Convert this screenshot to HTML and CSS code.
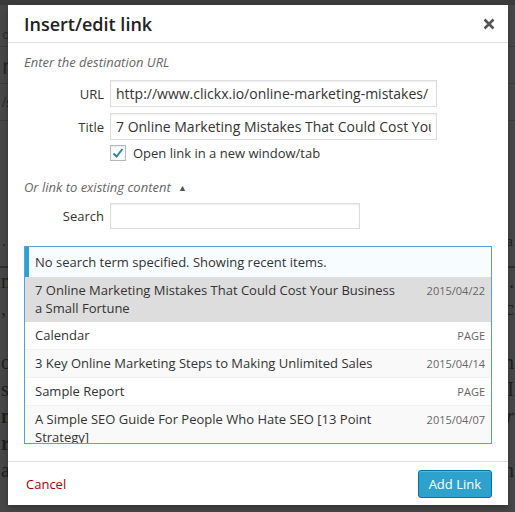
FILE: index.html
```html
<!DOCTYPE html>
<html lang="en">
<head>
    <meta charset="UTF-8">
    <title>Insert/edit link</title>
    <link rel="stylesheet" href="styles.css">
</head>
<body>

    <!-- dimmed editor page behind the modal -->
    <div class="backdrop">
        <div class="band band-top"><span>os</span></div>
        <div class="band"><span class="big">ma</span></div>
        <div class="band"><span>/s</span></div>
        <div class="band band-tall"><span>.</span><span class="right-bit">a</span></div>
        <div class="page-text">
            <p>n<span class="right-bit">.</span></p>
            <p>, <span class="right-bit">c</span></p>
            <p>&nbsp; t</p>
            <p>o<span class="right-bit">h</span></p>
            <p>s<span class="right-bit">I</span></p>
            <p><b>n</b><span class="right-bit"><i>r</i></span></p>
            <p><b>r</b></p>
            <p>a<span class="right-bit">n</span></p>
        </div>
    </div>

    <div class="modal">
        <div class="modal-header">
            <h1>Insert/edit link</h1>
            <svg class="close" width="12" height="12" viewBox="0 0 12 12"><path d="M1.5 1.5 L10.5 10.5 M10.5 1.5 L1.5 10.5" stroke="#555" stroke-width="2.6"/></svg>
        </div>

        <div class="modal-body">
            <p class="howto">Enter the destination URL</p>

            <div class="field">
                <label>URL</label>
                <input type="text" value="http://www.clickx.io/online-marketing-mistakes/">
            </div>
            <div class="field">
                <label>Title</label>
                <input type="text" value="7 Online Marketing Mistakes That Could Cost Your Business a Small Fortune">
            </div>
            <div class="field check-row">
                <label></label>
                <span class="checkbox">
                    <svg width="12" height="12" viewBox="0 0 12 12"><path d="M1.5 6.5 L4.5 9.5 L10.5 2" fill="none" stroke="#1e8cbe" stroke-width="2"/></svg>
                </span>
                <span>Open link in a new window/tab</span>
            </div>

            <p class="howto toggle">Or link to existing content <span class="arrow">&#9650;</span></p>

            <div class="field search-row">
                <label>Search</label>
                <input type="text" class="search" value="">
            </div>

            <div class="results">
                <div class="notice">No search term specified. Showing recent items.</div>
                <ul>
                    <li class="selected"><span class="item-title">7 Online Marketing Mistakes That Could Cost Your Business a Small Fortune</span><span class="info">2015/04/22</span></li>
                    <li><span class="item-title">Calendar</span><span class="info">PAGE</span></li>
                    <li class="alt"><span class="item-title">3 Key Online Marketing Steps to Making Unlimited Sales</span><span class="info">2015/04/14</span></li>
                    <li><span class="item-title">Sample Report</span><span class="info">PAGE</span></li>
                    <li class="alt"><span class="item-title">A Simple SEO Guide For People Who Hate SEO [13 Point Strategy]</span><span class="info">2015/04/07</span></li>
                </ul>
            </div>
        </div>

        <div class="modal-footer">
            <a class="cancel">Cancel</a>
            <button>Add Link</button>
        </div>
    </div>

</body>
</html>
```

FILE: styles.css
```css
body {
    margin: 0;
    width: 515px;
    height: 512px;
    overflow: hidden;
    background: #474747;
    font-family: "Open Sans", "Noto Sans", sans-serif;
    position: relative;
}

/* background page, already dimmed */
.backdrop {
    height: 512px;
    color: #1f1f1f;
    font-family: "Liberation Serif", serif;
}
.band {
    height: 36px;
    border-bottom: 1px solid #3c3c3c;
    font-size: 15px;
    line-height: 36px;
    display: flex;
    justify-content: space-between;
    padding: 0 2px;
}
.band-top {
    height: 47px;
    line-height: 58px;
    border-top: 5px solid #3b3b3b;
    box-sizing: border-box;
    font-family: "Open Sans", sans-serif;
    font-size: 13px;
    color: #2a2a2a;
}
.band .big {
    font-family: "Open Sans", sans-serif;
    font-size: 22px;
    color: #252525;
}
.band-tall {
    height: 145px;
    line-height: 240px;
    border-bottom: 2px solid #2e2e2e;
}
.page-text p {
    margin: 0;
    font-size: 20px;
    line-height: 27px;
    display: flex;
    justify-content: space-between;
    padding: 0 1px;
}

/* modal */
.modal {
    position: absolute;
    left: 8px;
    top: 5px;
    width: 500px;
    height: 500px;
    background: #fff;
    box-shadow: 0 3px 6px rgba(0, 0, 0, 0.3);
    display: flex;
    flex-direction: column;
    color: #333;
}
.modal-header {
    height: 37px;
    flex-shrink: 0;
    border-bottom: 1px solid #ddd;
    display: flex;
    align-items: center;
    justify-content: space-between;
    padding: 0 13px 0 16px;
}
.modal-header h1 {
    margin: 0;
    font-size: 18px;
    font-weight: 600;
    color: #222;
}

.modal-body {
    padding: 6px 16px 0;
    flex: 1;
    font-size: 13px;
}
.howto {
    margin: 0;
    font-style: italic;
    color: #666;
    line-height: 26px;
}
.field {
    display: flex;
    align-items: center;
    margin-top: 6px;
}
.field:first-of-type {
    margin-top: 5px;
}
.field label {
    width: 80px;
    text-align: right;
    padding-right: 6px;
    flex-shrink: 0;
}
.field input {
    width: 327px;
    height: 27px;
    box-sizing: border-box;
    border: 1px solid #ddd;
    box-shadow: inset 0 1px 2px rgba(0, 0, 0, 0.07);
    font-family: "Open Sans", sans-serif;
    font-size: 14px;
    color: #333;
    padding: 0 5px;
    margin: 0;
}
.field input.search {
    width: 250px;
    height: 26px;
}
.check-row {
    margin-top: 4px;
    height: 17px;
}
.checkbox {
    width: 16px;
    height: 16px;
    box-sizing: border-box;
    border: 1px solid #b4b9be;
    box-shadow: inset 0 1px 2px rgba(0, 0, 0, 0.1);
    display: flex;
    align-items: center;
    justify-content: center;
    margin-right: 7px;
}
.toggle {
    margin-top: 13px;
}
.arrow {
    font-style: normal;
    font-size: 9px;
    color: #555;
    margin-left: 4px;
    vertical-align: 1px;
}
.search-row {
    margin-top: 2px;
}

.results {
    margin-top: 17px;
    height: 198px;
    box-sizing: border-box;
    border: 1px solid #5b9dd9;
    overflow: hidden;
    color: #333;
}
.notice {
    border-left: 4px solid #2ea2cc;
    background: #f7fcfe;
    padding: 0 6px;
    line-height: 30px;
}
.results ul {
    list-style: none;
    margin: 0;
    padding: 0;
}
.results li {
    display: flex;
    justify-content: space-between;
    align-items: flex-start;
    padding: 4px 6px 4px 10px;
    line-height: 18px;
    border-bottom: 1px solid #f1f1f1;
    background: #fff;
}
.results li.alt {
    background: #f9f9f9;
}
.results li.selected {
    background: #ddd;
    border-bottom-color: #ddd;
}
.item-title {
    padding-right: 28px;
}
.info {
    font-size: 11px;
    color: #666;
    white-space: nowrap;
    line-height: 19px;
}

.modal-footer {
    height: 44px;
    flex-shrink: 0;
    border-top: 1px solid #ddd;
    box-sizing: border-box;
    display: flex;
    align-items: center;
    justify-content: space-between;
    padding: 0 16px 0 18px;
}
.cancel {
    color: #a00;
    font-size: 13px;
}
.modal-footer button {
    height: 28px;
    padding: 0 10px;
    background: #2ea2cc;
    border: 1px solid #0074a2;
    border-radius: 3px;
    box-shadow: inset 0 1px 0 rgba(120, 200, 230, 0.5);
    color: #fff;
    font-family: "Open Sans", sans-serif;
    font-size: 13px;
}
```
